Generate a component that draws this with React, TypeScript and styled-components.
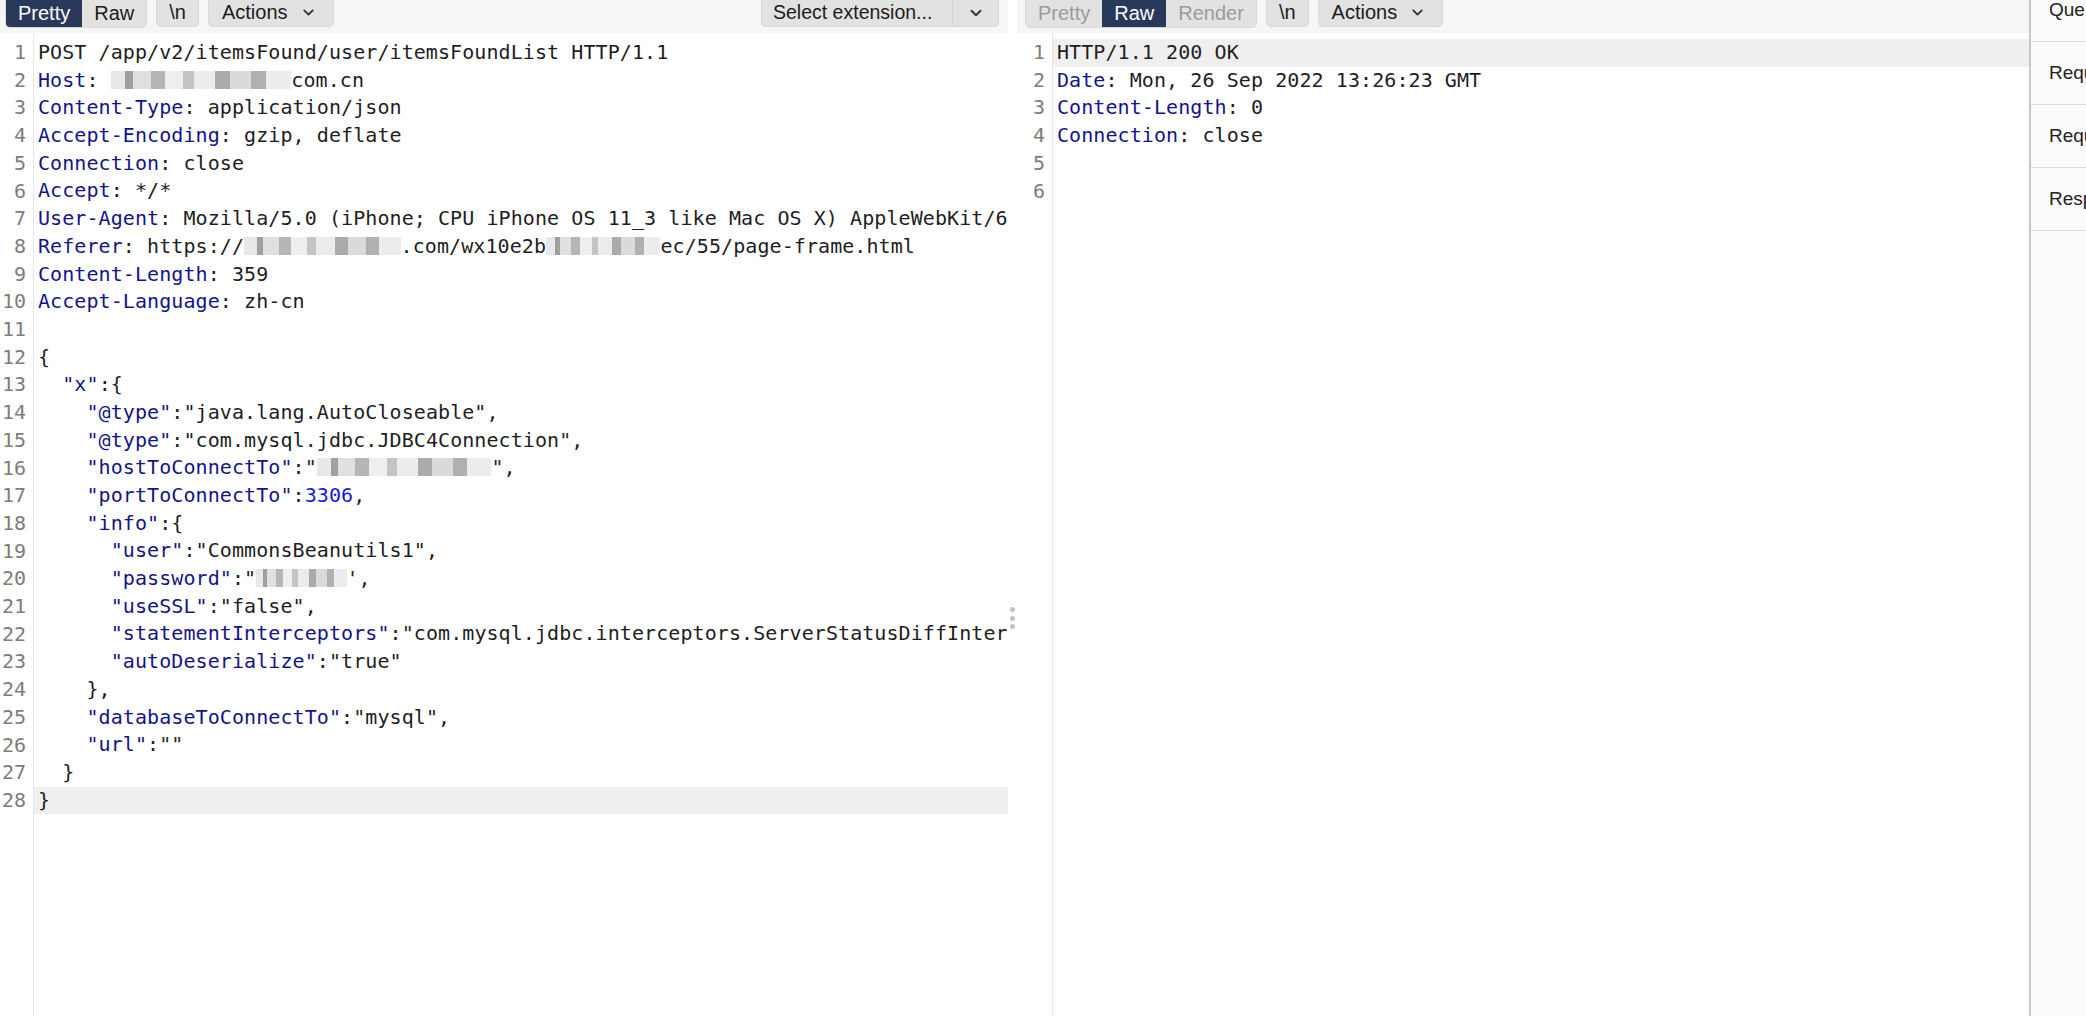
import styled, { createGlobalStyle } from "styled-components";
import { ChevronDown } from "lucide-react";

type Tok = [kind: "k" | "v" | "n" | "b", text: string, width?: number];

const request: Tok[][] = [
  [["v", "POST /app/v2/itemsFound/user/itemsFoundList HTTP/1.1"]],
  [["k", "Host"], ["v", ": "], ["b", "", 15], ["v", "com.cn"]],
  [["k", "Content-Type"], ["v", ": application/json"]],
  [["k", "Accept-Encoding"], ["v", ": gzip, deflate"]],
  [["k", "Connection"], ["v", ": close"]],
  [["k", "Accept"], ["v", ": */*"]],
  [["k", "User-Agent"], ["v", ": Mozilla/5.0 (iPhone; CPU iPhone OS 11_3 like Mac OS X) AppleWebKit/605.1.15 (KHTML, like Gecko) Mobile/15E148"]],
  [["k", "Referer"], ["v", ": https://"], ["b", "", 13], ["v", ".com/wx10e2b"], ["b", "", 9.5], ["v", "ec/55/page-frame.html"]],
  [["k", "Content-Length"], ["v", ": 359"]],
  [["k", "Accept-Language"], ["v", ": zh-cn"]],
  [],
  [["v", "{"]],
  [["v", "  "], ["k", "\"x\""], ["v", ":{"]],
  [["v", "    "], ["k", "\"@type\""], ["v", ":\"java.lang.AutoCloseable\","]],
  [["v", "    "], ["k", "\"@type\""], ["v", ":\"com.mysql.jdbc.JDBC4Connection\","]],
  [["v", "    "], ["k", "\"hostToConnectTo\""], ["v", ":\""], ["b", "", 14.5], ["v", "\","]],
  [["v", "    "], ["k", "\"portToConnectTo\""], ["v", ":"], ["n", "3306"], ["v", ","]],
  [["v", "    "], ["k", "\"info\""], ["v", ":{"]],
  [["v", "      "], ["k", "\"user\""], ["v", ":\"CommonsBeanutils1\","]],
  [["v", "      "], ["k", "\"password\""], ["v", ":\""], ["b", "", 7.5], ["v", "',"]],
  [["v", "      "], ["k", "\"useSSL\""], ["v", ":\"false\","]],
  [["v", "      "], ["k", "\"statementInterceptors\""], ["v", ":\"com.mysql.jdbc.interceptors.ServerStatusDiffInterceptor\","]],
  [["v", "      "], ["k", "\"autoDeserialize\""], ["v", ":\"true\""]],
  [["v", "    },"]],
  [["v", "    "], ["k", "\"databaseToConnectTo\""], ["v", ":\"mysql\","]],
  [["v", "    "], ["k", "\"url\""], ["v", ":\"\""]],
  [["v", "  }"]],
  [["v", "}"]],
];

const response: Tok[][] = [
  [["v", "HTTP/1.1 200 OK"]],
  [["k", "Date"], ["v", ": Mon, 26 Sep 2022 13:26:23 GMT"]],
  [["k", "Content-Length"], ["v", ": 0"]],
  [["k", "Connection"], ["v", ": close"]],
  [],
  [],
];

const inspector = ["Query parameters", "Request cookies", "Request headers", "Response headers"];

const GlobalStyle = createGlobalStyle`
  html, body { margin: 0; padding: 0; background: #fff; overflow: hidden; }
  body { font-family: "Liberation Sans", Arial, sans-serif; }
`;

const Page = styled.div`
  display: flex;
  width: 2086px;
  height: 1016px;
  overflow: hidden;
  background: #fff;
`;

const Panel = styled.div<{ $width: number }>`
  display: flex;
  flex-direction: column;
  width: ${(p) => p.$width}px;
  flex-shrink: 0;
  overflow: hidden;
`;

const Toolbar = styled.div<{ $pad: number }>`
  display: flex;
  align-items: flex-start;
  gap: 9px;
  height: 33px;
  padding: 0 9px 0 ${(p) => p.$pad}px;
  background: #f6f6f6;
  flex-shrink: 0;
`;

const Spacer = styled.div`
  flex: 1;
`;

const Group = styled.div`
  display: flex;
  margin-top: -5px;
  border-radius: 5px;
  overflow: hidden;
  border: 1px solid #d8d8d8;
  border-top: none;
`;

const Button = styled.div<{ $active?: boolean; $disabled?: boolean }>`
  display: flex;
  align-items: center;
  gap: 12px;
  height: 32px;
  padding: 4px 12px 0;
  box-sizing: border-box;
  font-size: 20px;
  background: ${(p) => (p.$active ? "#29395a" : "#e2e2e2")};
  color: ${(p) => (p.$active ? "#fff" : p.$disabled ? "#9b9b9b" : "#1c1c1c")};
  white-space: nowrap;
`;

const Single = styled(Button)`
  margin-top: -5px;
  border-radius: 5px;
  border: 1px solid #d8d8d8;
  border-top: none;
`;

const Menu = styled(Single)`
  padding-left: 13px;
  padding-right: 16px;
`;

const SelectBox = styled.div`
  display: flex;
  margin-top: -5px;
  height: 32px;
  width: 238px;
  box-sizing: border-box;
  border-radius: 5px;
  border: 1px solid #d8d8d8;
  border-top: none;
  background: #e2e2e2;
  font-size: 19.5px;
  color: #1c1c1c;
`;

const SelectLabel = styled.div`
  display: flex;
  align-items: center;
  padding: 4px 0 0 11px;
  width: 191px;
  box-sizing: border-box;
  border-right: 1px solid #d2d2d2;
`;

const SelectArrow = styled.div`
  flex: 1;
  display: flex;
  align-items: center;
  justify-content: center;
  padding-top: 4px;
`;

const Editor = styled.div`
  display: flex;
  flex: 1;
  padding-top: 6px;
  font-family: "DejaVu Sans Mono", "Liberation Mono", monospace;
  font-size: 20px;
  line-height: 27.7px;
`;

const Gutter = styled.div<{ $width: number }>`
  width: ${(p) => p.$width}px;
  flex-shrink: 0;
  box-sizing: border-box;
  padding-right: 7px;
  text-align: right;
  color: #7d7d7d;
  border-right: 1px solid #e6e6e6;
  margin-top: -6px;
  padding-top: 6px;
`;

const Code = styled.div`
  flex: 1;
  overflow: hidden;
`;

const Line = styled.div<{ $active?: boolean }>`
  height: 27.7px;
  padding-left: 4px;
  white-space: pre;
  letter-spacing: 0.08px;
  color: #1e1e1e;
  background: ${(p) => (p.$active ? "#efefef" : "transparent")};
`;

const Key = styled.span`
  color: #14148a;
`;

const Num = styled.span`
  color: #1a1ae6;
`;

const Blur = styled.span<{ $ch: number }>`
  display: inline-block;
  width: ${(p) => p.$ch}ch;
  height: 18px;
  vertical-align: -2px;
  background:
    linear-gradient(90deg, #e4e4e4 0 8%, #8f8f8f 8% 12%, #dadada 12% 22%, #a9a9a9 22% 30%, #ececec 30% 40%, #b9b9b9 40% 46%, #e8e8e8 46% 58%, #9c9c9c 58% 66%, #d4d4d4 66% 78%, #a3a3a3 78% 86%, #e9e9e9 86% 100%);
  opacity: 0.85;
`;

const Splitter = styled.div`
  width: 9px;
  flex-shrink: 0;
  display: flex;
  flex-direction: column;
  align-items: center;
  gap: 3.5px;
  padding-top: 607px;
`;

const Dot = styled.span`
  width: 5px;
  height: 5px;
  border-radius: 50%;
  background: #c2c2c2;
`;

const Sidebar = styled.div`
  flex: 1;
  display: flex;
  flex-direction: column;
  border-left: 2px solid #c6c6c6;
  background: #fbfbfb;
  overflow: hidden;
`;

const SideList = styled.div`
  margin-top: -21px;
`;

const SideItem = styled.div`
  height: 62px;
  display: flex;
  align-items: center;
  padding-left: 18px;
  border-bottom: 1px solid #dcdcdc;
  font-size: 19px;
  color: #222;
  white-space: nowrap;
`;

const Tokens = ({ toks }: { toks: Tok[] }) => (
  <>
    {toks.map(([kind, text, width], i) =>
      kind === "k" ? (
        <Key key={i}>{text}</Key>
      ) : kind === "n" ? (
        <Num key={i}>{text}</Num>
      ) : kind === "b" ? (
        <Blur key={i} $ch={width ?? 8} />
      ) : (
        <span key={i}>{text}</span>
      )
    )}
  </>
);

const CodeView = ({ lines, gutter, active }: { lines: Tok[][]; gutter: number; active: number }) => (
  <Editor>
    <Gutter $width={gutter}>
      {lines.map((_, i) => (
        <div key={i}>{i + 1}</div>
      ))}
    </Gutter>
    <Code>
      {lines.map((toks, i) => (
        <Line key={i} $active={i === active}>
          <Tokens toks={toks} />
        </Line>
      ))}
    </Code>
  </Editor>
);

export default function App() {
  return (
    <>
      <GlobalStyle />
      <Page>
        <Panel $width={1008}>
          <Toolbar $pad={5}>
            <Group>
              <Button $active>Pretty</Button>
              <Button>Raw</Button>
            </Group>
            <Single>\n</Single>
            <Menu>
              Actions <ChevronDown size={17} strokeWidth={2.6} color="#333" />
            </Menu>
            <Spacer />
            <SelectBox>
              <SelectLabel>Select extension...</SelectLabel>
              <SelectArrow>
                <ChevronDown size={18} strokeWidth={2.6} color="#333" />
              </SelectArrow>
            </SelectBox>
          </Toolbar>
          <CodeView lines={request} gutter={34} active={27} />
        </Panel>
        <Splitter>
          <Dot />
          <Dot />
          <Dot />
        </Splitter>
        <Panel $width={1012}>
          <Toolbar $pad={8}>
            <Group>
              <Button $disabled>Pretty</Button>
              <Button $active>Raw</Button>
              <Button $disabled>Render</Button>
            </Group>
            <Single>\n</Single>
            <Menu>
              Actions <ChevronDown size={17} strokeWidth={2.6} color="#333" />
            </Menu>
          </Toolbar>
          <CodeView lines={response} gutter={36} active={0} />
        </Panel>
        <Sidebar>
          <SideList>
            {inspector.map((label, i) => (
              <SideItem key={i}>{label}</SideItem>
            ))}
          </SideList>
        </Sidebar>
      </Page>
    </>
  );
}
